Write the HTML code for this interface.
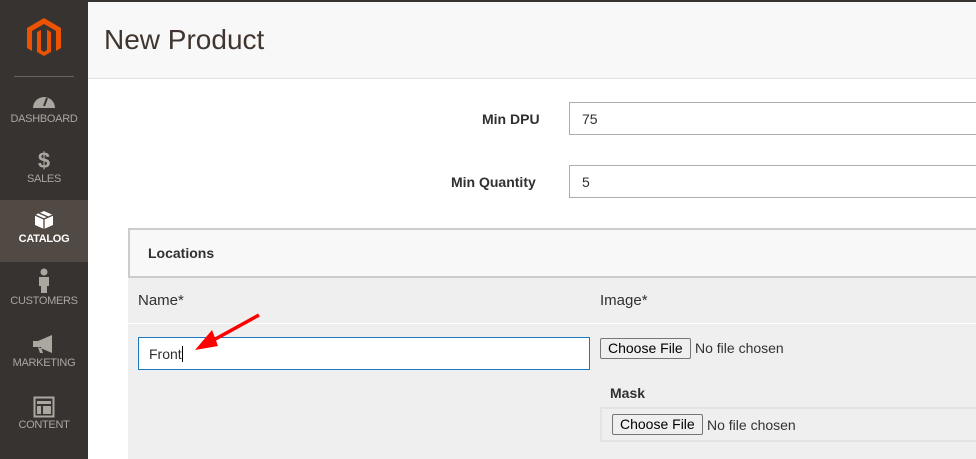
<!DOCTYPE html>
<html><head><style>
*{box-sizing:border-box;margin:0;padding:0}
body{width:976px;height:459px;overflow:hidden;background:#fff;font-family:"Liberation Sans",Arial,sans-serif;position:relative;color:#303030}
.sb{position:absolute;left:0;top:0;width:88px;height:459px;background:#373330}
.it{position:absolute;left:0;width:88px;height:62px;text-align:center;color:#aaa6a0;font-size:11px}
.it span{position:absolute;left:0;right:0;top:33px;letter-spacing:-0.3px}
.it svg{position:absolute;left:50%;transform:translateX(-50%);top:12px}
.act{background:#514943;color:#fff;font-weight:bold}
.hdr{position:absolute;left:88px;top:0;right:0;height:79px;background:#f8f8f8;border-bottom:1px solid #e3e3e3;border-top:2px solid #373330}
.hdr h1{position:absolute;left:16px;top:22px;font-weight:normal;font-size:28px;color:#41362f}
.lbl{position:absolute;font-size:14px;font-weight:bold;color:#303030}
.inp{position:absolute;background:#fff;border:1px solid #adadad;font-size:14px;padding:0 12px;display:flex;align-items:center}
.btn{position:absolute;background:#efefef;border:1px solid #767676;border-radius:2px;font-size:14px;color:#000;padding:0 7px;height:21px;line-height:19px}
.nf{position:absolute;font-size:14px;color:#333}
</style></head><body>
<div class="sb">
 <svg style="position:absolute;left:27px;top:18px" width="34" height="40" viewBox="0 0 34 40"><path d="M17 0L34 10V30L29 33V13L17 6L5 13V33L0 30V10Z M17 10L24 14V34L17 38L10 34V14L14 12V32L17 34L20 32V12Z" fill="#eb5202"/></svg>
 <div style="position:absolute;left:14px;top:76px;width:60px;height:1px;background:#6a6460"></div>
 <div class="it" style="top:80px"><svg width="24" height="18" viewBox="0 0 24 18"><path d="M1 16A11 11 0 0 1 23 16Z" fill="#aaa6a0"/><path d="M12 14L15 6" stroke="#373330" stroke-width="2"/></svg><span>DASHBOARD</span></div>
 <div class="it" style="top:140px"><svg width="16" height="24" viewBox="0 0 16 24" style="top:8px"><text x="8" y="20" text-anchor="middle" font-size="22" font-weight="bold" fill="#aaa6a0" font-family="Liberation Sans">$</text></svg><span>SALES</span></div>
 <div class="it act" style="top:200px"><svg width="20" height="20" viewBox="0 0 20 20" style="top:10px"><path d="M10 1L19 5V15L10 19L1 15V5Z" fill="#fff"/><path d="M1 5L10 9L19 5M10 9V19M5 3L14 7" stroke="#514943" stroke-width="1.3" fill="none"/></svg><span>CATALOG</span></div>
 <div class="it" style="top:262px"><svg width="14" height="26" viewBox="0 0 14 26" style="top:6px"><circle cx="7" cy="4" r="3.5" fill="#aaa6a0"/><path d="M2 9H12V18H10V25H4V18H2Z" fill="#aaa6a0"/></svg><span>CUSTOMERS</span></div>
 <div class="it" style="top:324px"><svg width="24" height="20" viewBox="0 0 24 20" style="top:10px"><path d="M1 7H6L20 1V19L6 13H1Z M6 13L8 19H11L9 13" fill="#aaa6a0"/></svg><span>MARKETING</span></div>
 <div class="it" style="top:386px"><svg width="22" height="22" viewBox="0 0 22 22" style="top:10px"><rect x="1.5" y="1.5" width="19" height="19" fill="none" stroke="#aaa6a0" stroke-width="2"/><rect x="4" y="5" width="14" height="3" fill="#aaa6a0"/><rect x="4" y="10" width="4" height="8" fill="#aaa6a0"/><rect x="10" y="10" width="8" height="8" fill="#aaa6a0"/></svg><span>CONTENT</span></div>
</div>
<div class="hdr"><h1>New Product</h1></div>
<div class="lbl" style="left:482px;top:111px">Min DPU</div>
<div class="inp" style="left:569px;top:102px;width:420px;height:33px">75</div>
<div class="lbl" style="left:451px;top:174px">Min Quantity</div>
<div class="inp" style="left:569px;top:165px;width:420px;height:33px">5</div>
<div style="position:absolute;left:128px;top:228px;width:860px;height:50px;background:#f8f8f8;border:2px solid #ccc"></div>
<div class="lbl" style="left:148px;top:245px">Locations</div>
<div style="position:absolute;left:128px;top:278px;width:848px;height:181px;background:#efefef"></div>
<div style="position:absolute;left:128px;top:323px;width:848px;height:1px;background:#fff"></div>
<div class="lbl" style="left:138px;top:292px;font-weight:normal;font-size:15px">Name*</div>
<div class="lbl" style="left:600px;top:292px;font-weight:normal;font-size:15px">Image*</div>
<div class="inp" style="left:138px;top:337px;width:452px;height:33px;border-color:#1979c3;padding-left:10px">Front<span style="display:inline-block;width:1px;height:16px;background:#000"></span></div>
<div class="btn" style="left:600px;top:338px">Choose File</div>
<div class="nf" style="left:695px;top:340px">No file chosen</div>
<div class="lbl" style="left:610px;top:385px">Mask</div>
<div style="position:absolute;left:600px;top:407px;width:390px;height:35px;border:2px solid #e3e3e3;background:#efefef"></div>
<div class="btn" style="left:612px;top:414px">Choose File</div>
<div class="nf" style="left:707px;top:417px">No file chosen</div>
<svg style="position:absolute;left:0;top:0" width="976" height="459"><line x1="259" y1="315" x2="210" y2="342" stroke="#f00" stroke-width="3.5"/><path d="M195 350L212 330L218 346Z" fill="#f00"/></svg>
</body></html>
